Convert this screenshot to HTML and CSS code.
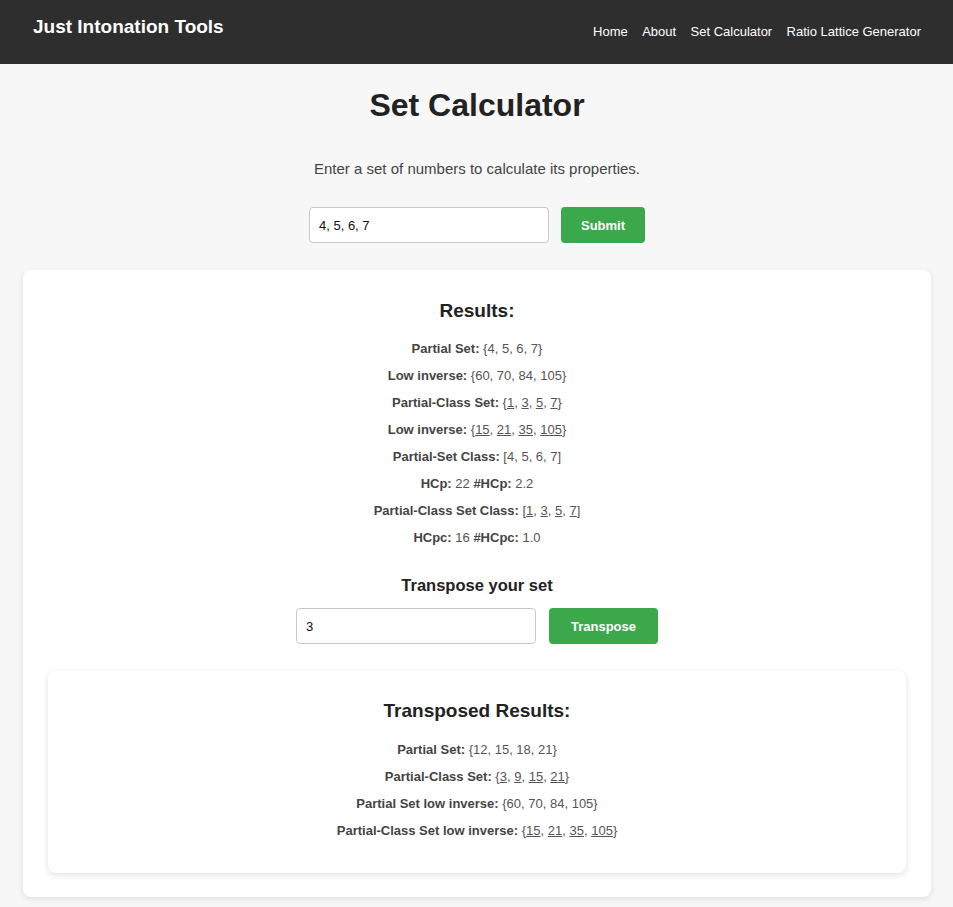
FILE: index.html
```html
<!DOCTYPE html>
<html lang="en">
<head>
<meta charset="utf-8">
<title>Set Calculator - Just Intonation Tools</title>
<link rel="stylesheet" href="styles.css">
</head>
<body>
<header class="site-header">
  <div class="brand">Just Intonation Tools</div>
  <nav class="nav">
    <a href="#">Home</a>
    <a href="#">About</a>
    <a href="#">Set Calculator</a>
    <a href="#">Ratio Lattice Generator</a>
  </nav>
</header>
<main class="main">
  <h1 class="page-title">Set Calculator</h1>
  <p class="intro">Enter a set of numbers to calculate its properties.</p>
  <form class="entry-form">
    <input class="text-input" type="text" value="4, 5, 6, 7">
    <button class="btn" type="button">Submit</button>
  </form>
  <section class="card">
    <h2 class="card-title">Results:</h2>
    <div class="rows">
      <p class="row"><b>Partial Set:</b> {4, 5, 6, 7}</p>
      <p class="row"><b>Low inverse:</b> {60, 70, 84, 105}</p>
      <p class="row"><b>Partial-Class Set:</b> {<u>1</u>, <u>3</u>, <u>5</u>, <u>7</u>}</p>
      <p class="row"><b>Low inverse:</b> {<u>15</u>, <u>21</u>, <u>35</u>, <u>105</u>}</p>
      <p class="row"><b>Partial-Set Class:</b> [4, 5, 6, 7]</p>
      <p class="row"><b>HCp:</b> 22 <b>#HCp:</b> 2.2</p>
      <p class="row"><b>Partial-Class Set Class:</b> [<u>1</u>, <u>3</u>, <u>5</u>, <u>7</u>]</p>
      <p class="row"><b>HCpc:</b> 16 <b>#HCpc:</b> 1.0</p>
    </div>
    <h3 class="sub-title">Transpose your set</h3>
    <form class="transpose-form">
      <input class="text-input" type="text" value="3">
      <button class="btn btn-wide" type="button">Transpose</button>
    </form>
    <section class="card inner-card">
      <h2 class="card-title">Transposed Results:</h2>
      <div class="rows">
        <p class="row"><b>Partial Set:</b> {12, 15, 18, 21}</p>
        <p class="row"><b>Partial-Class Set:</b> {<u>3</u>, <u>9</u>, <u>15</u>, <u>21</u>}</p>
        <p class="row"><b>Partial Set low inverse:</b> {60, 70, 84, 105}</p>
        <p class="row"><b>Partial-Class Set low inverse:</b> {<u>15</u>, <u>21</u>, <u>35</u>, <u>105</u>}</p>
      </div>
    </section>
  </section>
</main>
</body>
</html>
```

FILE: styles.css
```css
* { box-sizing: border-box; }

html, body {
  margin: 0;
  padding: 0;
  background: #f7f7f7;
  font-family: "Liberation Sans", Arial, sans-serif;
  color: #333;
}

.site-header {
  height: 64px;
  background: #2e2e2e;
  display: flex;
  justify-content: space-between;
  align-items: flex-start;
  padding: 16px 32px 0 33px;
}

.brand {
  color: #fff;
  font-size: 19px;
  font-weight: bold;
  line-height: 22px;
}

.nav {
  display: flex;
  gap: 14.4px;
  margin-top: 8px;
  line-height: 15px;
}

.nav a {
  color: #fff;
  text-decoration: none;
  font-size: 13px;
}

.main {
  display: flex;
  flex-direction: column;
  align-items: center;
  padding: 0 22px 10px 23px;
}

.page-title {
  margin: 23px 0 0;
  font-size: 32px;
  line-height: 37px;
  color: #222;
}

.intro {
  margin: 36px 0 0;
  font-size: 15px;
  line-height: 17px;
  color: #444;
}

.entry-form,
.transpose-form {
  display: flex;
  justify-content: center;
  align-items: center;
  gap: 12px;
  margin: 30px 0 0;
}

.transpose-form {
  gap: 13px;
  margin: 13px 0 0;
}

.text-input {
  width: 240px;
  height: 36px;
  border: 1px solid #c8c8c8;
  border-radius: 4px;
  padding: 0 9px;
  font-family: "Liberation Sans", Arial, sans-serif;
  font-size: 13px;
  color: #111;
  background: #fff;
}

.btn {
  height: 36px;
  padding: 0 20px;
  border: none;
  border-radius: 4px;
  background: #3ca84c;
  color: #fff;
  font-family: "Liberation Sans", Arial, sans-serif;
  font-size: 13px;
  font-weight: bold;
}

.btn-wide {
  width: 109px;
  padding: 0;
}

.card {
  align-self: stretch;
  margin-top: 27px;
  background: #fff;
  border-radius: 8px;
  box-shadow: 0 2px 6px rgba(0, 0, 0, 0.1);
  padding: 24px 25px 24px;
  display: flex;
  flex-direction: column;
  align-items: center;
}

.inner-card {
  margin-top: 27px;
  padding: 23px 25px 29px;
  box-shadow: 0 2px 7px rgba(0, 0, 0, 0.12);
}

.card-title {
  margin: 6px 0 13px;
  font-size: 19px;
  line-height: 22px;
  color: #222;
}

.inner-card .card-title {
  margin-bottom: 14px;
}

.rows {
  display: flex;
  flex-direction: column;
  align-items: center;
}

.row {
  margin: 0;
  font-size: 13px;
  line-height: 27px;
  color: #555;
}

.row b {
  color: #444;
}

.row u {
  text-underline-offset: 1px;
}

.sub-title {
  margin: 24px 0 0;
  font-size: 16.5px;
  line-height: 20px;
  color: #222;
}
```
